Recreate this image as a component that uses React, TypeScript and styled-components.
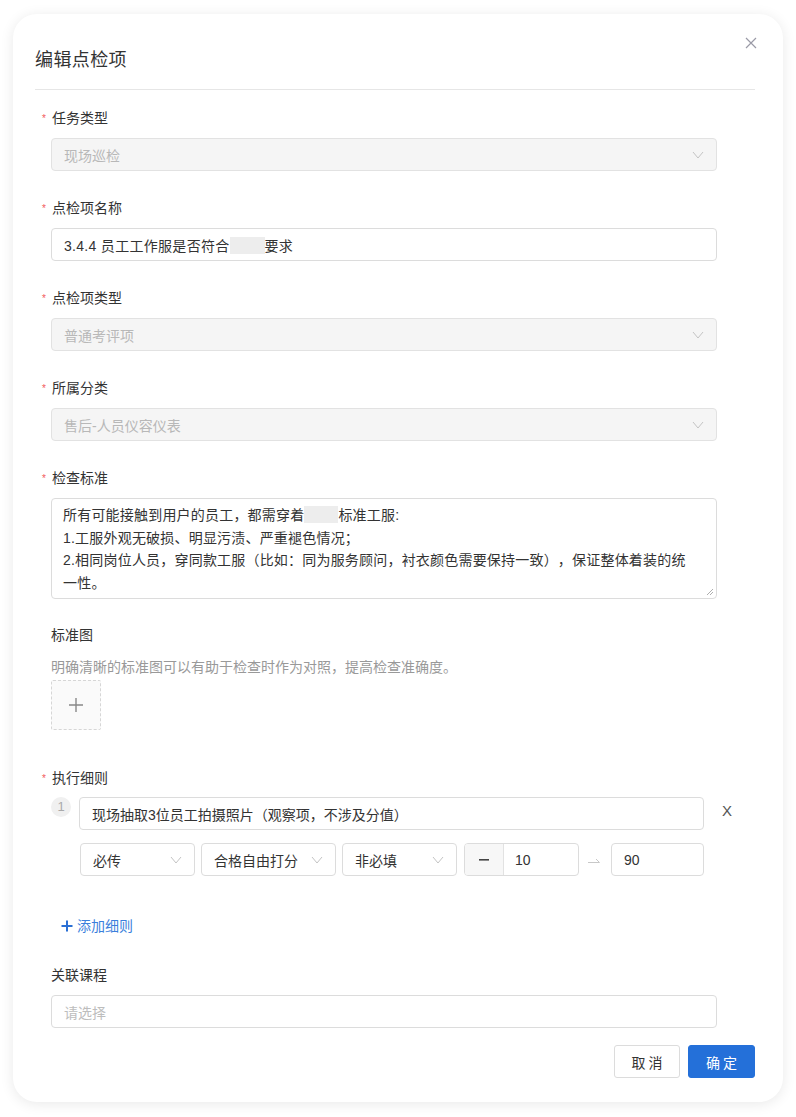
import React from 'react';
import styled, { createGlobalStyle } from 'styled-components';

const GlobalStyle = createGlobalStyle`
  html, body {
    margin: 0;
    padding: 0;
    background: #ffffff;
  }
  body {
    font-family: "Liberation Sans", "Noto Sans CJK SC", sans-serif;
    color: #333;
    text-spacing-trim: space-all;
  }
  * {
    box-sizing: border-box;
  }
`;

const Page = styled.div`
  width: 796px;
  height: 1117px;
  padding: 14px 13px 0 13px;
`;

const Card = styled.div`
  position: relative;
  width: 770px;
  height: 1088px;
  background: #fff;
  border-radius: 24px;
  box-shadow: 0 2px 14px rgba(0, 0, 0, 0.09);
  padding: 33px 28px 0 22px;
`;

const Title = styled.h2`
  margin: 0;
  font-size: 18px;
  line-height: 26px;
  font-weight: 400;
  letter-spacing: 0.4px;
  color: #333;
`;

const CloseButton = styled.button`
  position: absolute;
  top: 20px;
  right: 23px;
  width: 18px;
  height: 18px;
  padding: 0;
  border: none;
  background: transparent;
  display: flex;
  align-items: center;
  justify-content: center;
`;

const Divider = styled.div`
  height: 1px;
  background: #e6e6e6;
  margin-top: 16px;
`;

const FormBody = styled.div`
  padding: 18px 38px 0 16px;
  display: flex;
  flex-direction: column;
`;

const Field = styled.div<{ $mb?: number }>`
  display: flex;
  flex-direction: column;
  margin-bottom: ${(p) => (p.$mb ?? 27)}px;
`;

const Label = styled.div<{ $required?: boolean; $gap?: number }>`
  position: relative;
  font-size: 14px;
  line-height: 20px;
  color: #333;
  margin-bottom: ${(p) => (p.$gap ?? 10)}px;
  padding-left: ${(p) => (p.$required ? 1 : 0)}px;

  &:before {
    content: ${(p) => (p.$required ? "'*'" : "''")};
    position: absolute;
    left: -9px;
    top: 1px;
    color: #f25a5a;
    font-size: 10px;
  }
`;

const Control = styled.div<{ $disabled?: boolean; $width?: number }>`
  height: 33px;
  width: ${(p) => (p.$width ? `${p.$width}px` : '100%')};
  flex-shrink: 0;
  border: 1px solid ${(p) => (p.$disabled ? '#e2e2e2' : '#dcdcdc')};
  background: ${(p) => (p.$disabled ? '#f5f5f5' : '#fff')};
  border-radius: 4px;
  display: flex;
  align-items: center;
  justify-content: space-between;
  padding: 0 12px;
  font-size: 14px;
  color: ${(p) => (p.$disabled ? '#b8b8b8' : '#333')};
`;

const Placeholder = styled.span`
  color: #bdbdbd;
`;

const Redacted = styled.span<{ $w: number }>`
  display: inline-block;
  width: ${(p) => p.$w}px;
  height: 17px;
  vertical-align: -3px;
  background: #ededed;
`;

const NameText = styled.span`
  letter-spacing: 0.3px;
`;

const TextArea = styled.div`
  position: relative;
  height: 101px;
  border: 1px solid #dcdcdc;
  border-radius: 4px;
  padding: 5px 11px;
  font-size: 14px;
  line-height: 22.5px;
  letter-spacing: 0.2px;
  color: #333;
`;

const Grip = styled.svg`
  position: absolute;
  right: 2px;
  bottom: 2px;
`;

const Hint = styled.div`
  font-size: 14px;
  line-height: 20px;
  color: #999;
  margin-bottom: 3px;
`;

const Upload = styled.div`
  width: 50px;
  height: 50px;
  border: 1px dashed #d6d6d6;
  border-radius: 2px;
  background: #fafafa;
  display: flex;
  align-items: center;
  justify-content: center;
`;

const RuleRow = styled.div`
  display: flex;
  align-items: center;
  gap: 8px;
`;

const Badge = styled.span`
  flex-shrink: 0;
  width: 20px;
  height: 20px;
  border-radius: 50%;
  background: #f0f0f0;
  color: #aaa;
  font-size: 13px;
  line-height: 20px;
  text-align: center;
  align-self: flex-start;
`;

const RemoveX = styled.span`
  margin-left: 10px;
  font-size: 15px;
  color: #555;
  margin-top: -6px;
`;

const OptionRow = styled.div`
  display: flex;
  align-items: center;
  gap: 6px;
  padding-left: 29px;
  margin-top: 13px;
`;

const NumberGroup = styled.div`
  display: flex;
  flex-shrink: 0;
  width: 115px;
  height: 33px;
  border: 1px solid #dcdcdc;
  border-radius: 4px;
  overflow: hidden;
  margin-left: 1px;
`;

const Addon = styled.div`
  width: 39px;
  background: #f7f7f7;
  border-right: 1px solid #e2e2e2;
  display: flex;
  align-items: center;
  justify-content: center;
`;

const NumberValue = styled.div`
  flex: 1;
  display: flex;
  align-items: center;
  padding-left: 11px;
  font-size: 14px;
  color: #333;
`;

const Harpoon = styled.svg`
  flex-shrink: 0;
  margin: 0 5px 0 3px;
`;

const AddLink = styled.div`
  display: flex;
  align-items: center;
  gap: 4px;
  margin: 40px 0 29px 10px;
  font-size: 14px;
  line-height: 20px;
  color: #3b7fdc;
`;

const Footer = styled.div`
  display: flex;
  justify-content: flex-end;
  gap: 8px;
  margin-right: -38px;
  margin-top: -10px;
`;

const Button = styled.button<{ $primary?: boolean }>`
  height: 33px;
  padding: 0;
  width: ${(p) => (p.$primary ? 67 : 66)}px;
  border-radius: 3px;
  border: 1px solid ${(p) => (p.$primary ? '#2470d9' : '#dcdcdc')};
  background: ${(p) => (p.$primary ? '#2470d9' : '#fff')};
  color: ${(p) => (p.$primary ? '#fff' : '#333')};
  font-family: inherit;
  font-size: 14px;
  letter-spacing: 3px;
  text-indent: 3px;
`;

const Chevron = () => (
  <svg width="12" height="8" viewBox="0 0 12 8">
    <polyline points="1,1 6,7 11,1" fill="none" stroke="#c4c4c4" strokeWidth="1" />
  </svg>
);

const Select: React.FC<{ value: string; disabled?: boolean; width?: number }> = ({ value, disabled, width }) => (
  <Control $disabled={disabled} $width={width}>
    <span>{value}</span>
    <Chevron />
  </Control>
);

const App: React.FC = () => {
  return (
    <Page>
      <GlobalStyle />
      <Card>
        <Title>编辑点检项</Title>
        <CloseButton aria-label="close">
          <svg width="12" height="12" viewBox="0 0 12 12">
            <path d="M1 1 L11 11 M11 1 L1 11" stroke="#9a9aa6" strokeWidth="1.2" />
          </svg>
        </CloseButton>
        <Divider />

        <FormBody>
          <Field>
            <Label $required>任务类型</Label>
            <Select value="现场巡检" disabled />
          </Field>

          <Field>
            <Label $required>点检项名称</Label>
            <Control>
              <NameText>
                3.4.4 员工工作服是否符合<Redacted $w={35} />要求
              </NameText>
            </Control>
          </Field>

          <Field>
            <Label $required>点检项类型</Label>
            <Select value="普通考评项" disabled />
          </Field>

          <Field>
            <Label $required>所属分类</Label>
            <Select value="售后-人员仪容仪表" disabled />
          </Field>

          <Field $mb={26}>
            <Label $required>检查标准</Label>
            <TextArea>
              所有可能接触到用户的员工，都需穿着<Redacted $w={34} />标准工服:
              <br />
              1.工服外观无破损、明显污渍、严重褪色情况；
              <br />
              2.相同岗位人员，穿同款工服（比如：同为服务顾问，衬衣颜色需要保持一致），保证整体着装的统
              <br />
              一性。
              <Grip width="8" height="8" viewBox="0 0 8 8">
                <path d="M7 1 L1 7 M7 4 L4 7" stroke="#999" strokeWidth="0.8" />
              </Grip>
            </TextArea>
          </Field>

          <Field $mb={38}>
            <Label $gap={12}>标准图</Label>
            <Hint>明确清晰的标准图可以有助于检查时作为对照，提高检查准确度。</Hint>
            <Upload>
              <svg width="16" height="16" viewBox="0 0 16 16">
                <path d="M8 1 V15 M1 8 H15" stroke="#888" strokeWidth="1.4" />
              </svg>
            </Upload>
          </Field>

          <Field $mb={0}>
            <Label $required $gap={9}>执行细则</Label>
            <RuleRow>
              <Badge>1</Badge>
              <Control $width={625}>
                <span>现场抽取3位员工拍摄照片（观察项，不涉及分值）</span>
              </Control>
              <RemoveX>X</RemoveX>
            </RuleRow>
            <OptionRow>
              <Select value="必传" width={115} />
              <Select value="合格自由打分" width={135} />
              <Select value="非必填" width={115} />
              <NumberGroup>
                <Addon>
                  <svg width="10" height="2" viewBox="0 0 10 2">
                    <rect x="0" y="0" width="10" height="1.6" fill="#444" />
                  </svg>
                </Addon>
                <NumberValue>10</NumberValue>
              </NumberGroup>
              <Harpoon width="12" height="8" viewBox="0 0 12 8">
                <path d="M0 6.5 H11.5 L8 3" fill="none" stroke="#c8c8c8" strokeWidth="1" />
              </Harpoon>
              <Control $width={93}>
                <span>90</span>
              </Control>
            </OptionRow>
          </Field>

          <AddLink>
            <svg width="12" height="12" viewBox="0 0 12 12">
              <path d="M6 0.5 V11.5 M0.5 6 H11.5" stroke="#2a6fd4" strokeWidth="2" />
            </svg>
            <span>添加细则</span>
          </AddLink>

          <Field $mb={27}>
            <Label>关联课程</Label>
            <Control>
              <Placeholder>请选择</Placeholder>
            </Control>
          </Field>

          <Footer>
            <Button>取消</Button>
            <Button $primary>确定</Button>
          </Footer>
        </FormBody>
      </Card>
    </Page>
  );
};

export default App;
